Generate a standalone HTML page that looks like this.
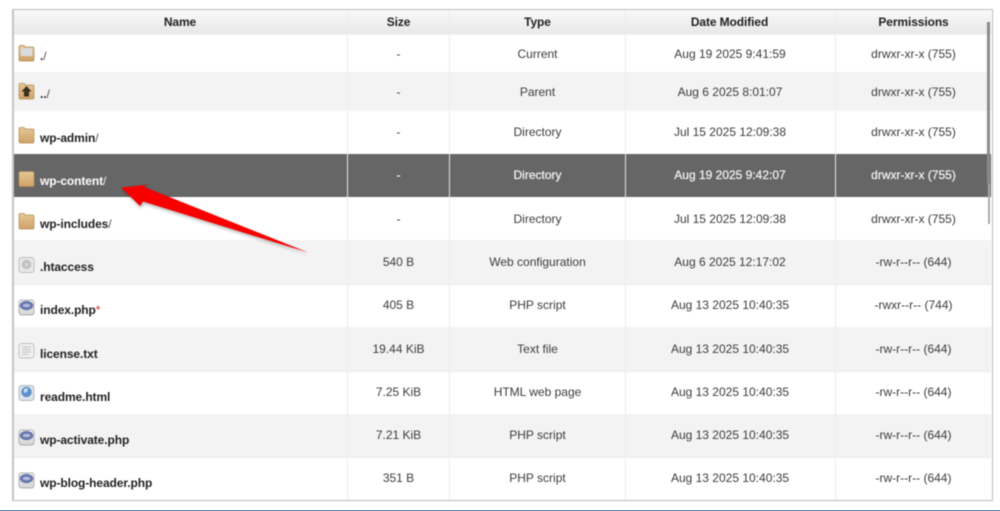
<!DOCTYPE html>
<html><head><meta charset="utf-8"><style>
html,body{margin:0;padding:0;background:#fff}
body{width:1000px;height:511px;position:relative;overflow:hidden;font-family:"Liberation Sans",Arial,sans-serif}
#w{position:absolute;left:0;top:0;width:1000px;height:511px;background:#fff;filter:blur(.4px)}
.t{position:absolute;left:12px;top:9px;width:978px;height:490px;border:1px solid #bdbdbd;border-top:1px solid #bdbdbd;border-left:2px solid #c4c4c4;box-sizing:content-box;}
.r{position:absolute;left:14px;width:977px}
.c{position:absolute;white-space:nowrap;text-align:center;font-size:12px;color:#3c3c3c;transform:translateY(-50%)}
.d{color:#f2f2f2;-webkit-text-stroke:.25px #f2f2f2}
.n{position:absolute;left:40px;white-space:nowrap;font-size:12px;font-weight:bold;color:#222;letter-spacing:-.1px}
.n i{font-style:normal;font-weight:normal;color:#555}
.n b{color:#c33;font-weight:normal}
.h{font-weight:bold;color:#222;font-size:12px;letter-spacing:-.1px}
.v{position:absolute;width:1px}
svg.i{position:absolute;left:18px;width:17px;height:17px}
</style></head><body>
<div id="w">
<div class="t"></div>
<div class="r" style="top:10px;height:24px;background:linear-gradient(#f9f9f9,#e8e8e8)"></div>
<div class="r" style="top:34px;height:1px;background:#f4f4f4"></div>
<div class="r" style="top:72px;height:39px;background:#f3f3f3"></div>
<div class="r" style="top:240px;height:44px;background:#f3f3f3"></div>
<div class="r" style="top:327px;height:44px;background:#f3f3f3"></div>
<div class="r" style="top:414px;height:43px;background:#f3f3f3"></div>
<div class="r" style="top:284px;height:1px;background:#eaeaea"></div>
<div class="r" style="top:371px;height:1px;background:#eaeaea"></div>
<div class="r" style="top:457px;height:1px;background:#eaeaea"></div>
<div class="v" style="left:347px;top:10px;height:490px;background:#ececec"></div>
<div class="v" style="left:449px;top:10px;height:490px;background:#ececec"></div>
<div class="v" style="left:625px;top:10px;height:490px;background:#ececec"></div>
<div class="v" style="left:835px;top:10px;height:490px;background:#ececec"></div>
<div class="r" style="top:154px;height:43px;background:#666"></div>
<div class="v" style="left:347px;top:154px;height:43px;background:#e4e4e4"></div>
<div class="v" style="left:449px;top:154px;height:43px;background:#e4e4e4"></div>
<div class="v" style="left:625px;top:154px;height:43px;background:#e4e4e4"></div>
<div class="v" style="left:835px;top:154px;height:43px;background:#e4e4e4"></div>
<div style="position:absolute;left:987px;top:22px;width:3px;height:162px;background:#8b8b8b"></div>
<div style="position:absolute;left:988px;top:184px;width:2px;height:40px;background:#aaa"></div>

<div class="c h" style="left:13px;width:334px;top:22px">Name</div>
<div class="c h" style="left:348px;width:101px;top:22px">Size</div>
<div class="c h" style="left:450px;width:175px;top:22px">Type</div>
<div class="c h" style="left:626px;width:207px;top:22px">Date Modified</div>
<div class="c h" style="left:836px;width:155px;top:22px">Permissions</div>

<svg width="0" height="0" style="position:absolute"><defs>
<linearGradient id="f" x1="0" y1="0" x2="0" y2="1"><stop offset="0" stop-color="#e6c795"/><stop offset="1" stop-color="#cfa268"/></linearGradient>
<linearGradient id="g" x1="0" y1="0" x2="0" y2="1"><stop offset="0" stop-color="#f5f5f5"/><stop offset="1" stop-color="#d4d4d4"/></linearGradient>
<g id="fo"><path d="M1 2Q1 .5 2.5 .5H6L7.5 2H14.5Q16 2 16 3.5V14.5Q16 16 14.5 16H2.5Q1 16 1 14.5Z" fill="url(#f)" stroke="#b18a55" stroke-width=".7"/></g>
<g id="ph"><rect x="1" y="1" width="15" height="15" rx="2.5" fill="url(#g)" stroke="#9a9a9a" stroke-width=".7"/><ellipse cx="8.5" cy="6.5" rx="6.8" ry="4.6" fill="#6877ad"/><ellipse cx="8.5" cy="6.5" rx="3.8" ry="1.8" fill="#b3bcdb"/></g>
</defs></svg>

<svg class="i" style="top:45px" viewBox="0 0 17 17"><use href="#fo"/><rect x="2.5" y="3" width="12" height="8" fill="#dadada"/></svg>
<svg class="i" style="top:83px" viewBox="0 0 17 17"><use href="#fo"/><path d="M8.5 3L13.5 8.5H11V13.5H6V8.5H3.5Z" fill="#3a2e1e"/></svg>
<svg class="i" style="top:127px" viewBox="0 0 17 17"><use href="#fo"/></svg>
<svg class="i" style="top:171px" viewBox="0 0 17 17"><path d="M1 1.5Q1 .5 2.5 .5H14.5Q16 .5 16 2V14Q16 15.5 14.5 15.5H2.5Q1 15.5 1 14Z" fill="url(#f)" stroke="#b18a55" stroke-width=".7"/></svg>
<svg class="i" style="top:213px" viewBox="0 0 17 17"><use href="#fo"/></svg>
<svg class="i" style="top:257px" viewBox="0 0 17 17"><rect x="1" y="0.5" width="15" height="15" rx="2.5" fill="#e8e8e8" stroke="#b0b0b0" stroke-width=".7"/><circle cx="8.5" cy="7.5" r="4.8" fill="#c2c2c2"/><circle cx="8.5" cy="7.5" r="1.5" fill="#ddd"/></svg>
<svg class="i" style="top:299px" viewBox="0 0 17 17"><use href="#ph"/></svg>
<svg class="i" style="top:343px" viewBox="0 0 17 17"><rect x="1" y="0.5" width="15" height="14.5" rx="2.5" fill="#f0f0f0" stroke="#b0b0b0" stroke-width=".7"/><path d="M4 4H13M4 6.5H13M4 9H13M4 11.5H10" stroke="#c0c0c0" stroke-width="1"/></svg>
<svg class="i" style="top:385px" viewBox="0 0 17 17"><rect x="1" y="0.5" width="15" height="15" rx="2.5" fill="#dde3ea" stroke="#a0a8b0" stroke-width=".7"/><circle cx="8.5" cy="7" r="5.2" fill="#5b90cc"/><path d="M6 4L10 3L9 7L6 8Z" fill="#cddff0"/></svg>
<svg class="i" style="top:429px" viewBox="0 0 17 17"><use href="#ph"/></svg>
<svg class="i" style="top:472px" viewBox="0 0 17 17"><use href="#ph"/></svg>

<div class="n" style="top:49px">.<i>/</i></div>
<div class="n" style="top:87px">..<i>/</i></div>
<div class="n" style="top:131px">wp-admin<i>/</i></div>
<div class="n" style="top:174px;color:#fff">wp-content<i style="color:#eee">/</i></div>
<div class="n" style="top:217px">wp-includes<i>/</i></div>
<div class="n" style="top:260px">.htaccess</div>
<div class="n" style="top:303px">index.php<b>*</b></div>
<div class="n" style="top:347px">license.txt</div>
<div class="n" style="top:390px">readme.html</div>
<div class="n" style="top:433px">wp-activate.php</div>
<div class="n" style="top:476px">wp-blog-header.php</div>

<div class="c" style="left:348px;width:101px;top:54px">-</div><div class="c" style="left:450px;width:175px;top:54px">Current</div><div class="c" style="left:626px;width:208px;top:54px">Aug 19 2025 9:41:59</div><div class="c" style="left:836px;width:155px;top:54px">drwxr-xr-x (755)</div>
<div class="c" style="left:348px;width:101px;top:92px">-</div><div class="c" style="left:450px;width:175px;top:92px">Parent</div><div class="c" style="left:626px;width:208px;top:92px">Aug 6 2025 8:01:07</div><div class="c" style="left:836px;width:155px;top:92px">drwxr-xr-x (755)</div>
<div class="c" style="left:348px;width:101px;top:132px">-</div><div class="c" style="left:450px;width:175px;top:132px">Directory</div><div class="c" style="left:626px;width:208px;top:132px">Jul 15 2025 12:09:38</div><div class="c" style="left:836px;width:155px;top:132px">drwxr-xr-x (755)</div>
<div class="c d" style="left:348px;width:101px;top:175px">-</div><div class="c d" style="left:450px;width:175px;top:175px">Directory</div><div class="c d" style="left:626px;width:208px;top:175px">Aug 19 2025 9:42:07</div><div class="c d" style="left:836px;width:155px;top:175px">drwxr-xr-x (755)</div>
<div class="c" style="left:348px;width:101px;top:219px">-</div><div class="c" style="left:450px;width:175px;top:219px">Directory</div><div class="c" style="left:626px;width:208px;top:219px">Jul 15 2025 12:09:38</div><div class="c" style="left:836px;width:155px;top:219px">drwxr-xr-x (755)</div>
<div class="c" style="left:348px;width:101px;top:262px">540 B</div><div class="c" style="left:450px;width:175px;top:262px">Web configuration</div><div class="c" style="left:626px;width:208px;top:262px">Aug 6 2025 12:17:02</div><div class="c" style="left:836px;width:155px;top:262px">-rw-r--r-- (644)</div>
<div class="c" style="left:348px;width:101px;top:305px">405 B</div><div class="c" style="left:450px;width:175px;top:305px">PHP script</div><div class="c" style="left:626px;width:208px;top:305px">Aug 13 2025 10:40:35</div><div class="c" style="left:836px;width:155px;top:305px">-rwxr--r-- (744)</div>
<div class="c" style="left:348px;width:101px;top:349px">19.44 KiB</div><div class="c" style="left:450px;width:175px;top:349px">Text file</div><div class="c" style="left:626px;width:208px;top:349px">Aug 13 2025 10:40:35</div><div class="c" style="left:836px;width:155px;top:349px">-rw-r--r-- (644)</div>
<div class="c" style="left:348px;width:101px;top:392px">7.25 KiB</div><div class="c" style="left:450px;width:175px;top:392px">HTML web page</div><div class="c" style="left:626px;width:208px;top:392px">Aug 13 2025 10:40:35</div><div class="c" style="left:836px;width:155px;top:392px">-rw-r--r-- (644)</div>
<div class="c" style="left:348px;width:101px;top:435px">7.21 KiB</div><div class="c" style="left:450px;width:175px;top:435px">PHP script</div><div class="c" style="left:626px;width:208px;top:435px">Aug 13 2025 10:40:35</div><div class="c" style="left:836px;width:155px;top:435px">-rw-r--r-- (644)</div>
<div class="c" style="left:348px;width:101px;top:478px">351 B</div><div class="c" style="left:450px;width:175px;top:478px">PHP script</div><div class="c" style="left:626px;width:208px;top:478px">Aug 13 2025 10:40:35</div><div class="c" style="left:836px;width:155px;top:478px">-rw-r--r-- (644)</div>

<svg style="position:absolute;left:0;top:0;filter:drop-shadow(1px 2px 1.5px rgba(0,0,0,.3))" width="1000" height="511"><polygon points="121,187.5 149,184.5 143,186.5 308,252.5 143,201.5 140,206" fill="#f60000"/></svg>
</div>
<div style="position:absolute;left:0;top:510px;width:1000px;height:1px;background:#5b93bd"></div>
</body></html>
